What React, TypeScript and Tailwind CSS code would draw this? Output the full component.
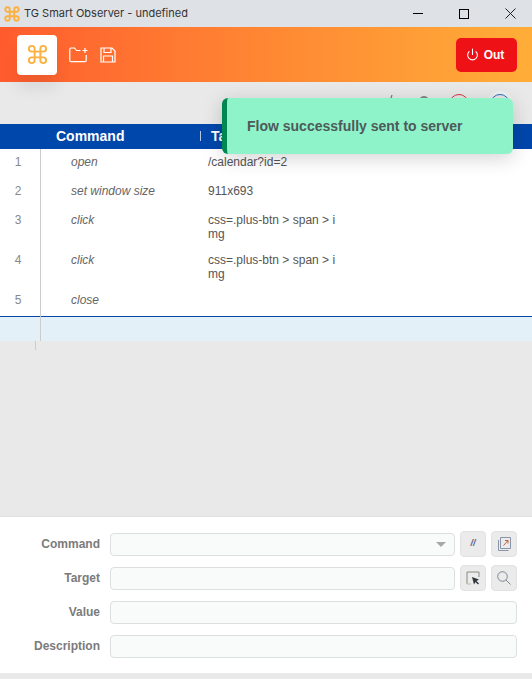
import React from 'react';
import { Command, Power } from 'lucide-react';

const font = 'font-["Liberation_Sans",Arial,sans-serif]';

const rows = [
  { n: 1, command: 'open', target: '/calendar?id=2' },
  { n: 2, command: 'set window size', target: '911x693' },
  { n: 3, command: 'click', target: 'css=.plus-btn > span > img' },
  { n: 4, command: 'click', target: 'css=.plus-btn > span > img' },
  { n: 5, command: 'close', target: '' },
];

const FormRow = ({ label, children }: { label: string; children: React.ReactNode }) => (
  <div className="flex items-center h-[26px]">
    <div className="w-[100px] pr-0 text-right text-xs font-bold text-[#7b7b7b]">{label}</div>
    <div className="ml-[10px] flex flex-1 items-center gap-[5px]">{children}</div>
  </div>
);

const Field = ({ children }: { children?: React.ReactNode }) => (
  <div className="flex h-[23px] flex-1 items-center justify-end rounded-[4px] border border-[#dcdfe0] bg-[#f9fafa] pr-2">
    {children}
  </div>
);

const ToolButton = ({ children }: { children: React.ReactNode }) => (
  <div className="flex h-[26px] w-[26px] items-center justify-center rounded-[4px] border border-[#e2e2e2] bg-[#ebebeb]">
    {children}
  </div>
);

export default function App() {
  return (
    <div className={`relative flex h-[679px] w-[532px] flex-col overflow-hidden bg-[#e9e9e9] ${font}`}>
      {/* window title */}
      <div className="flex h-[27px] items-center bg-[#dee1e6] pl-[3px]">
        <Command className="h-[18px] w-[18px] text-[#fbb040]" strokeWidth={2.4} />
        <span className="ml-[3px] font-['Inter',sans-serif] text-[11px] text-[#333]">TG Smart Observer - undefined</span>
        <div className="ml-auto flex items-center">
          <div className="mr-[36px] h-[1.5px] w-[10px] bg-black" />
          <div className="mr-[36px] h-[10px] w-[10px] border-[1.5px] border-black" />
          <svg className="mr-[16px] h-[11px] w-[11px]" viewBox="0 0 11 11" stroke="#222" strokeWidth="1">
            <path d="M0.5 0.5 L10.5 10.5 M10.5 0.5 L0.5 10.5" />
          </svg>
        </div>
      </div>

      {/* header */}
      <div className="relative z-10 flex h-[55px] items-center bg-gradient-to-r from-[#ff5b2e] to-[#ffad38] pl-[17px] pr-[15px]">
        <div className="flex h-[40px] w-[40px] items-center justify-center rounded-[4px] bg-white shadow-[0_14px_16px_rgba(0,0,0,0.07)]">
          <Command className="h-[23px] w-[23px] text-[#fbb040]" strokeWidth={2} />
        </div>
        <svg className="ml-[12px] h-[16px] w-[20px]" viewBox="0 0 20 16" fill="none" stroke="#fff" strokeWidth="1.2">
          <path d="M11.5 3.5 H7.5 L5.5 1 H2 Q0.8 1 0.8 2.2 V13.5 Q0.8 14.6 2 14.6 H16 Q17.2 14.6 17.2 13.5 V8" />
          <path d="M13.5 3.5 H18.5 M16 1 V6" />
        </svg>
        <svg className="ml-[11px] h-[16px] w-[16px]" viewBox="0 0 16 16" fill="none" stroke="#fff" strokeWidth="1.2">
          <path d="M1 1 H12 L15 4 V15 H1 Z" />
          <path d="M4 1 V5.5 H11 V1" />
          <path d="M3.5 15 V9 H12.5 V15" />
        </svg>
        <div className="ml-auto flex h-[34px] w-[61px] items-center justify-center gap-[5px] rounded-[5px] bg-[#ee1217] pr-[3px] text-xs font-bold text-white">
          <Power className="h-[13px] w-[13px]" strokeWidth={2} />
          Out
        </div>
      </div>

      {/* toolbar, mostly covered by the toast */}
      <div className="flex h-[42px] items-start bg-[#e9e9e9] pl-[386px] pt-[12px]">
        <svg className="h-[14px] w-[14px]" viewBox="0 0 14 14" stroke="#777" strokeWidth="1.2">
          <path d="M2 13 L6 1" />
        </svg>
        <div className="ml-[19px] mt-[2px] h-[12px] w-[10px] rounded-full border-2 border-[#888]" />
        <div className="ml-[20px] h-[20px] w-[20px] rounded-full border border-[#d0343c]" />
        <div className="ml-[21px] h-[20px] w-[20px] rounded-full border border-[#2b6cc4] shadow-[0_0_0_3px_rgba(255,255,255,0.35)]" />
      </div>

      {/* table */}
      <div className="flex h-[25px] items-center bg-[#0047ab] pb-[2px] text-sm font-bold text-white">
        <div className="w-[200px] pl-[56px]">Command</div>
        <div className="h-[10px] w-px bg-white/70" />
        <div className="pl-[10px]">Target</div>
      </div>
      <div className="bg-white">
        {rows.map(r => (
          <div key={r.n} className="flex min-h-[29px] items-start pt-[6px] pb-[6px] text-xs leading-[14px] text-[#555]">
            <div className="w-[36px] text-center text-[#888]">{r.n}</div>
            <div className="w-[172px] pl-[35px] italic text-[#666]">{r.command}</div>
            <div className="w-[130px] break-all">{r.target}</div>
          </div>
        ))}
      </div>
      <div className="relative h-[25px] border-t border-[#0047ab] bg-[#e3f0f8]" />
      <div className="flex-1 bg-[#e9e9e9]" />

      {/* form */}
      <div className="flex h-[157px] flex-col gap-[8px] border-t border-[#dfdfdf] bg-white pt-[14px] pr-[15px]">
        <FormRow label="Command">
          <Field>
            <div className="h-0 w-0 border-x-[5px] border-t-[5px] border-x-transparent border-t-[#a8a8a8]" />
          </Field>
          <ToolButton>
            <span className="text-[9px] font-bold italic text-[#5a5a8a]">//</span>
          </ToolButton>
          <ToolButton>
            <svg className="h-[16px] w-[16px]" viewBox="0 0 16 16" fill="none" strokeWidth="1">
              <path d="M2.5 4 V14.5 H12.5" stroke="#8a94a8" />
              <path d="M4.5 1.5 H14.5 V12.5 H4.5 Z" stroke="#8a94a8" />
              <path d="M7.5 9.5 L12 4.5 M9 4.5 H12 V7.5" stroke="#c2603c" />
            </svg>
          </ToolButton>
        </FormRow>
        <FormRow label="Target">
          <Field />
          <ToolButton>
            <svg className="h-[14px] w-[14px]" viewBox="0 0 14 14" fill="none">
              <path d="M1 13 V1 H13 V6" stroke="#8a8a80" strokeWidth="1" />
              <path d="M1 13 H5" stroke="#c9c9c0" strokeWidth="1.5" />
              <path d="M6 6 L13 8.5 L10.5 10 L13 12.5 L12 13.5 L9.5 11 L8 13.5 Z" fill="#33383f" />
            </svg>
          </ToolButton>
          <ToolButton>
            <svg className="h-[14px] w-[14px]" viewBox="0 0 14 14" fill="none" stroke="#7d8792" strokeWidth="1">
              <circle cx="5.5" cy="5.5" r="4.8" />
              <path d="M9 9 L13.5 13.5" />
            </svg>
          </ToolButton>
        </FormRow>
        <FormRow label="Value">
          <Field />
        </FormRow>
        <FormRow label="Description">
          <Field />
        </FormRow>
      </div>
      <div className="h-[6px] bg-[#e9e9e9]" />

      {/* vertical guide of the line-number column */}
      <div className="absolute left-[40px] top-[149px] h-[192px] w-px bg-[#cccccc]" />
      <div className="absolute left-[35px] top-[341px] h-[9px] w-px bg-[#cccccc]" />

      {/* toast */}
      <div className="absolute left-[222px] top-[98px] z-20 flex h-[56px] w-[291px] items-center rounded-[6px] border-l-[5px] border-[#00864f] bg-[#8ff3c9] pl-[20px] text-sm font-bold text-[#4d5a5a] shadow-[0_4px_20px_rgba(0,0,0,0.18)]">
        Flow successfully sent to server
      </div>
    </div>
  );
}
